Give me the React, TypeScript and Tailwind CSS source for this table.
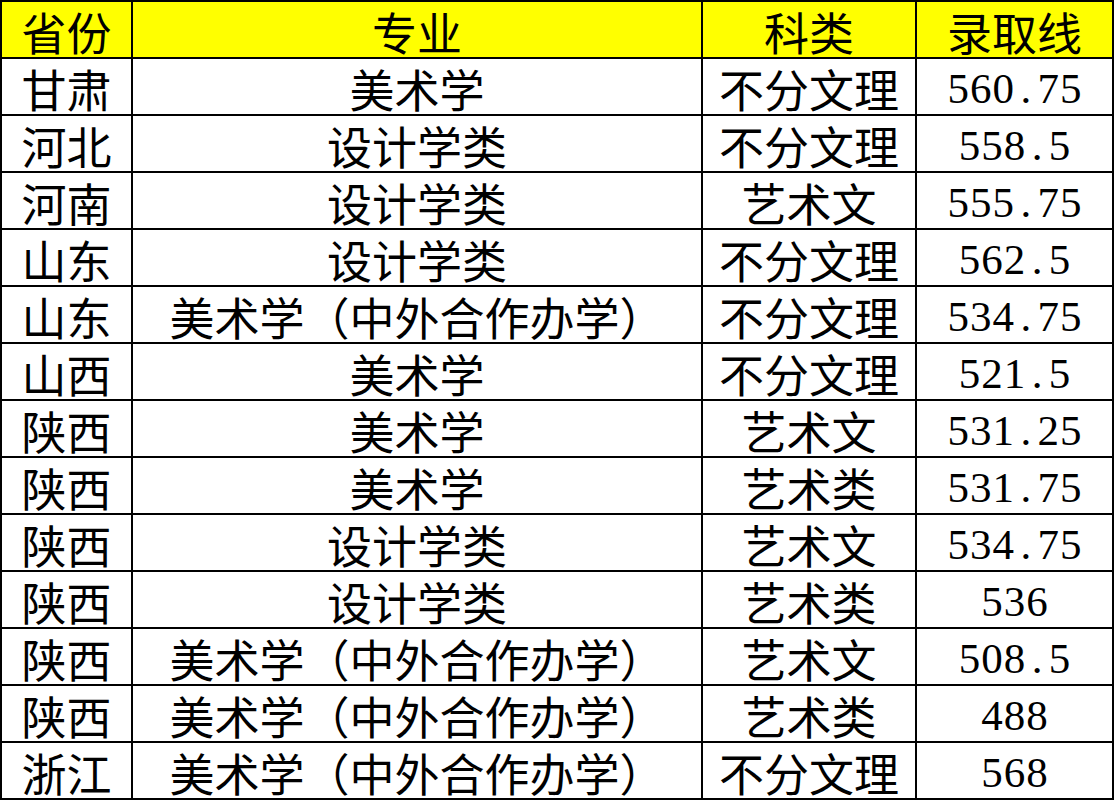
const rows: [string, string, string, string][] = [
  ["甘肃", "美术学", "不分文理", "560.75"],
  ["河北", "设计学类", "不分文理", "558.5"],
  ["河南", "设计学类", "艺术文", "555.75"],
  ["山东", "设计学类", "不分文理", "562.5"],
  ["山东", "美术学（中外合作办学）", "不分文理", "534.75"],
  ["山西", "美术学", "不分文理", "521.5"],
  ["陕西", "美术学", "艺术文", "531.25"],
  ["陕西", "美术学", "艺术类", "531.75"],
  ["陕西", "设计学类", "艺术文", "534.75"],
  ["陕西", "设计学类", "艺术类", "536"],
  ["陕西", "美术学（中外合作办学）", "艺术文", "508.5"],
  ["陕西", "美术学（中外合作办学）", "艺术类", "488"],
  ["浙江", "美术学（中外合作办学）", "不分文理", "568"],
];

const cell =
  "flex h-[57px] items-center justify-center border-b-2 border-r-2 border-black whitespace-nowrap leading-none pt-[3px]";

// 分数按等宽半角排布，每个字符占同样宽度
function Score({ value }: { value: string }) {
  return (
    <span className="flex font-['Liberation_Serif',serif] text-[43px] leading-none">
      {value.split("").map((ch, i) => (
        <span key={i} className="inline-block w-[22.5px] text-center">
          {ch}
        </span>
      ))}
    </span>
  );
}

export default function App() {
  return (
    <div className="h-[800px] w-[1115px] bg-white">
      <div className="grid w-[1114px] grid-cols-[131px_570px_214px_197px] border-l-2 border-t-2 border-black font-['Noto_Sans_CJK_SC',sans-serif] text-[45px] text-black">
        {["省份", "专业", "科类", "录取线"].map((h) => (
          <div key={h} className={`${cell} bg-[#ffff00]`}>
            {h}
          </div>
        ))}
        {rows.map((r, i) =>
          r.map((v, j) => (
            <div key={`${i}-${j}`} className={cell}>
              {j === 3 ? <Score value={v} /> : v}
            </div>
          ))
        )}
      </div>
    </div>
  );
}
